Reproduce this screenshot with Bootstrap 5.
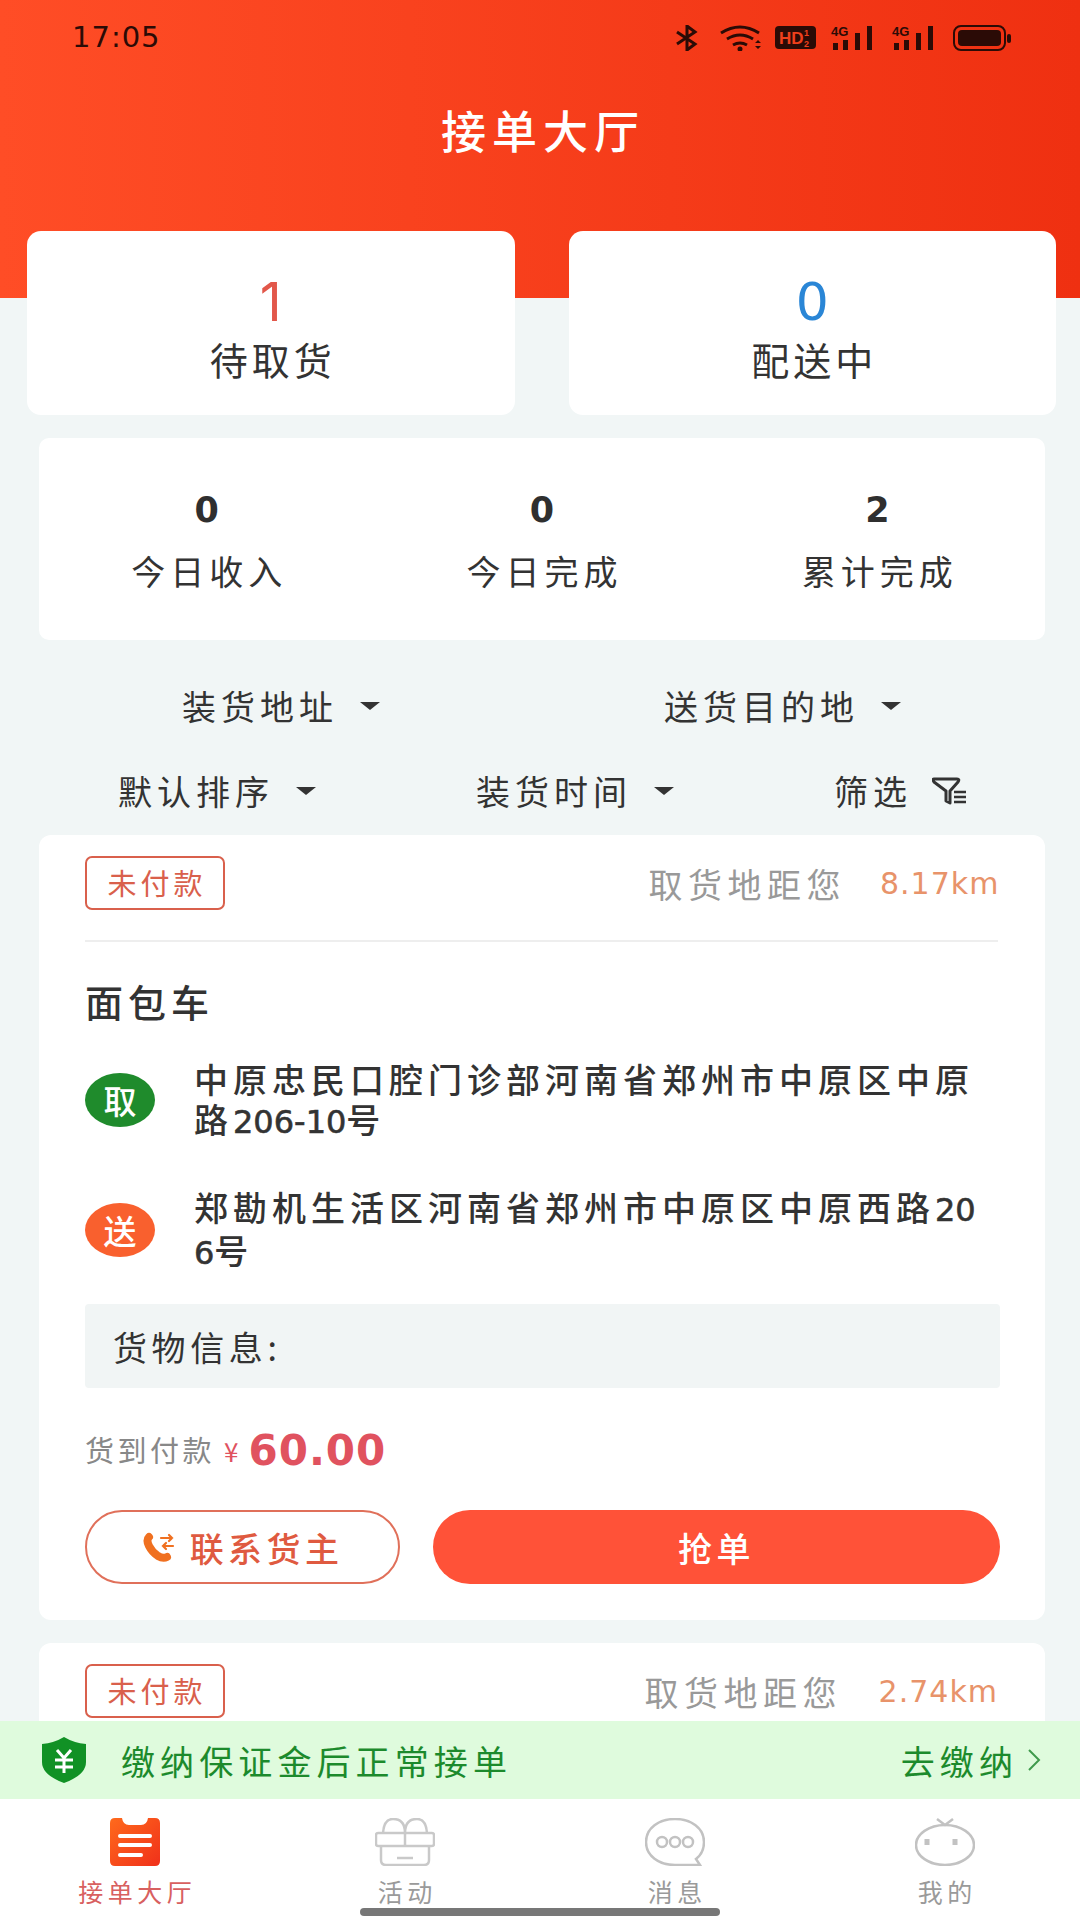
<!DOCTYPE html>
<html lang="zh-CN">
<head>
  <meta charset="UTF-8">
  <title>接单大厅</title>
  <meta name="viewport" content="width=device-width, initial-scale=1">
  <link href="https://cdn.jsdelivr.net/npm/bootstrap@5.3.3/dist/css/bootstrap.min.css" rel="stylesheet">
  <style>
    body {
      margin: 0;
      background: #f1f6f6;
      color: #333;
      font-family: "Noto Sans CJK SC", "Liberation Sans", sans-serif;
    }
    .phone { width: 1080px; height: 1920px; overflow: hidden; }
    .scroll-area { height: 1721px; overflow: hidden; }
    .num-font { font-family: "DejaVu Sans", "Noto Sans CJK SC", sans-serif; }

    /* header */
    .top-head { height: 298px; background: linear-gradient(to right, #ff4d26, #ef3011); }
    .status-row { height: 75px; padding: 0 68px 0 72px; color: #2b0b06; }
    .status-time { font-size: 29px; letter-spacing: 1px; }
    .page-title { height: 110px; color: #fff; font-size: 45px; font-weight: 500; letter-spacing: 6px; padding-left: 6px; }

    /* stats */
    .big-row { margin: -67px 24px 0 27px; gap: 54px; }
    .big-card { flex: 1; height: 184px; background: #fff; border-radius: 14px; }
    .big-num { font-family: Inter, sans-serif; font-size: 54px; font-weight: 400; line-height: 60px; padding-top: 41px; }
    .red-num { color: #e2574a; }
    .blue-num { color: #2a86d6; font-family: "DejaVu Sans", sans-serif; font-size: 52px; }
    .big-label { font-size: 38px; letter-spacing: 4px; line-height: 54px; margin-right: -4px; }
    .small-card { margin: 23px 35px 0 39px; height: 202px; background: #fff; border-radius: 10px; }
    .small-cell { flex: 1; }
    .small-num { font-size: 35px; font-weight: 700; line-height: 44px; padding-top: 50px; color: #2f2f2f; }
    .small-label { font-size: 34px; letter-spacing: 5px; line-height: 48px; margin-top: 15px; margin-right: -5px; }

    /* filters */
    .filter-row { font-size: 34px; letter-spacing: 5px; color: #333; line-height: 46px; }
    .filter-item { flex: none; }
    .filter-one { height: 89px; padding: 43px 0 0 182px; }
    .filter-one .filter-item { width: 482px; }
    .filter-two { height: 83px; padding: 40px 0 0 118px; }
    .filter-two .filter-item { width: 358px; }
    .caret-mark { width: 0; height: 0; margin-left: 22px; border-left: 10px solid transparent; border-right: 10px solid transparent; border-top: 8px solid #333; }
    .filter-icon { margin-left: 20px; }

    /* order */
    .order-box { margin: 23px 35px 0 39px; padding: 21px 47px 0 46px; height: 785px; background: #fff; border-radius: 12px; }
    .order-head { height: 86px; border-bottom: 2px solid #eee; }
    .pay-tag { width: 140px; height: 54px; border: 2px solid #d9604c; border-radius: 7px; color: #d9604c; font-size: 29px; letter-spacing: 4px; padding-left: 4px; }
    .dist-label { color: #999; font-size: 34px; letter-spacing: 5.5px; }
    .dist-value { color: #e8936a; font-size: 30px; letter-spacing: 1px; width: 118px; text-align: right; margin-left: 34px; white-space: nowrap; }
    .dist-wide { width: 122px; }
    .dist-wrap { height: 54px; }
    .car-type { font-size: 38px; font-weight: 500; letter-spacing: 5px; line-height: 50px; margin-top: 34px; }
    .addr-row { gap: 39px; }
    .addr-one { margin-top: 27px; height: 94px; }
    .addr-two { margin-top: 36px; height: 94px; }
    .addr-dot { flex: none; width: 70px; height: 54px; border-radius: 50%; color: #fff; font-size: 33px; font-weight: 500; line-height: 1; }
    .dot-green { background: #1f8b2c; }
    .dot-orange { background: #f9602e; }
    .addr-text { font-size: 34px; font-weight: 500; letter-spacing: 5px; line-height: 40px; color: #333; white-space: nowrap; }
    .addr-text .num-font { letter-spacing: 0; font-size: 32px; -webkit-text-stroke: 0.6px #333; }
    .cargo-box { height: 84px; margin-top: 27px; margin-right: -2px; padding-left: 28px; background: #f1f5f5; font-size: 34px; letter-spacing: 4.6px; border-radius: 4px; }
    .price-row { margin-top: 32px; height: 60px; }
    .price-note { color: #888; font-size: 29px; letter-spacing: 3.5px; }
    .price-mark { color: #e0525f; font-size: 26px; margin-left: 9px; }
    .price-val { color: #e0525f; font-size: 42px; font-weight: 700; letter-spacing: 1px; margin-left: 10px; }
    .btn-row { margin-top: 30px; gap: 33px; margin-right: -2px; }
    .call-btn { width: 315px; height: 74px; padding: 0; border: 2px solid #e0705a; border-radius: 37px; background: #fff; color: #df5a40; font-size: 34px; font-weight: 500; letter-spacing: 4.4px; gap: 14px; }
    .grab-btn { flex: 1; height: 74px; padding: 0; border: 0; border-radius: 37px; background: #ff5238; color: #fff; font-size: 34px; font-weight: 500; letter-spacing: 4.4px; }

    /* bottom */
    .notice-bar { height: 78px; padding: 0 38px 0 42px; background: #dffbdd; color: #1c8a2c; font-size: 34px; letter-spacing: 5.1px; }
    .notice-text { margin-left: 35px; }
    .tab-bar { height: 121px; background: #fff; }
    .tab-cell { flex: 1; padding-top: 19px; color: #9a9a9a; font-size: 25px; letter-spacing: 4.5px; }
    .tab-cell svg { display: block; }
    .tab-label { line-height: 34px; margin-top: 8px; margin-right: -4.5px; }
    .tab-on { color: #d8605f; }
    .home-line { position: absolute; left: 360px; bottom: 4px; width: 360px; height: 8px; border-radius: 4px; background: #777; }
  </style>
</head>
<body>
<div class="phone d-flex flex-column">
  <div class="scroll-area">

    <div class="top-head">
      <div class="status-row d-flex align-items-center justify-content-between">
        <span class="status-time num-font">17:05</span>
        <svg width="337" height="26" viewBox="0 0 337 26">
          <g fill="none" stroke="#2b0b06" stroke-width="3">
            <path d="M2 7l18 12-8 6V1l8 6L2 19"/>
            <path d="M46 8q19-12 38 0M52 14q13-8 26 0M58 20q7-4 14 0"/>
          </g>
          <circle cx="65" cy="24" r="2.5" fill="#2b0b06"/>
          <path d="M80 18l3-3 3 3zM80 21l3 3 3-3z" fill="#2b0b06"/>
          <rect x="100" y="1" width="41" height="23" rx="4" fill="#2b0b06"/>
          <text x="104" y="19" font-family="Liberation Sans" font-size="17" font-weight="700" fill="#f0401c">HD</text>
          <text x="129" y="11" font-family="Liberation Sans" font-size="9" font-weight="700" fill="#f0401c">1</text>
          <text x="129" y="22" font-family="Liberation Sans" font-size="9" font-weight="700" fill="#f0401c">2</text>
          <g fill="#2b0b06">
            <text x="156" y="11" font-family="Liberation Sans" font-size="13" font-weight="700">4G</text>
            <rect x="158" y="18" width="5" height="7"/><rect x="168" y="15" width="5" height="10"/><rect x="180" y="8" width="5" height="17"/><rect x="192" y="1" width="5" height="24"/>
            <text x="217" y="11" font-family="Liberation Sans" font-size="13" font-weight="700">4G</text>
            <rect x="219" y="18" width="5" height="7"/><rect x="229" y="15" width="5" height="10"/><rect x="241" y="8" width="5" height="17"/><rect x="253" y="1" width="5" height="24"/>
            <rect x="279" y="1" width="51" height="24" rx="7" fill="none" stroke="#2b0b06" stroke-width="2"/>
            <rect x="283" y="5" width="43" height="16" rx="4"/>
            <rect x="332" y="9" width="4" height="9" rx="2"/>
          </g>
        </svg>
      </div>
      <div class="page-title d-flex align-items-center justify-content-center">接单大厅</div>
    </div>

    <div class="big-row d-flex">
      <div class="big-card text-center">
        <div class="big-num red-num">1</div>
        <div class="big-label">待取货</div>
      </div>
      <div class="big-card text-center">
        <div class="big-num blue-num">0</div>
        <div class="big-label">配送中</div>
      </div>
    </div>

    <div class="small-card d-flex text-center">
      <div class="small-cell">
        <div class="small-num num-font">0</div>
        <div class="small-label">今日收入</div>
      </div>
      <div class="small-cell">
        <div class="small-num num-font">0</div>
        <div class="small-label">今日完成</div>
      </div>
      <div class="small-cell">
        <div class="small-num num-font">2</div>
        <div class="small-label">累计完成</div>
      </div>
    </div>

    <div class="filter-row filter-one d-flex">
      <div class="filter-item d-flex align-items-center"><span>装货地址</span><i class="caret-mark"></i></div>
      <div class="filter-item d-flex align-items-center"><span>送货目的地</span><i class="caret-mark"></i></div>
    </div>
    <div class="filter-row filter-two d-flex">
      <div class="filter-item d-flex align-items-center"><span>默认排序</span><i class="caret-mark"></i></div>
      <div class="filter-item d-flex align-items-center"><span>装货时间</span><i class="caret-mark"></i></div>
      <div class="filter-item d-flex align-items-center"><span>筛选</span>
        <svg class="filter-icon" width="36" height="28" viewBox="0 0 36 28" fill="none" stroke="#333" stroke-width="3" stroke-linejoin="round">
          <path d="M2 2h23q3 0 1 3l-8 9v12l-4-2V14L2 5q-2-3 0-3z"/>
          <path d="M22 15h12M22 20h12M22 25h12" stroke-width="2.4"/>
        </svg>
      </div>
    </div>

    <div class="order-box">
      <div class="order-head d-flex justify-content-between align-items-start">
        <div class="pay-tag d-flex align-items-center justify-content-center">未付款</div>
        <div class="dist-wrap d-flex align-items-center">
          <span class="dist-label">取货地距您</span>
          <span class="dist-value num-font">8.17km</span>
        </div>
      </div>
      <div class="car-type">面包车</div>
      <div class="addr-row addr-one d-flex align-items-center">
        <div class="addr-dot dot-green d-flex align-items-center justify-content-center">取</div>
        <div class="addr-text">中原忠民口腔门诊部河南省郑州市中原区中原<br>路<span class="num-font">206-10</span>号</div>
      </div>
      <div class="addr-row addr-two d-flex align-items-center">
        <div class="addr-dot dot-orange d-flex align-items-center justify-content-center">送</div>
        <div class="addr-text">郑勘机生活区河南省郑州市中原区中原西路<span class="num-font">20</span><br><span class="num-font">6</span>号</div>
      </div>
      <div class="cargo-box d-flex align-items-center">货物信息:</div>
      <div class="price-row d-flex align-items-center">
        <span class="price-note">货到付款</span>
        <span class="price-mark">¥</span>
        <span class="price-val num-font">60.00</span>
      </div>
      <div class="btn-row d-flex">
        <button class="btn call-btn d-flex align-items-center justify-content-center" type="button">
          <svg width="34" height="30" viewBox="0 0 34 30" fill="none" stroke="#f07020" stroke-linecap="round">
            <path d="M7 5q-3 3 0 9t9 10q5 3 9 1" stroke-width="8"/>
            <path d="M19 6h11m-3-3l3 3-3 3M31 14H21m3-3l-3 3 3 3" stroke-width="2.2"/>
          </svg>
          <span>联系货主</span>
        </button>
        <button class="btn grab-btn" type="button">抢单</button>
      </div>
    </div>

    <div class="order-box">
      <div class="order-head d-flex justify-content-between align-items-start">
        <div class="pay-tag d-flex align-items-center justify-content-center">未付款</div>
        <div class="dist-wrap d-flex align-items-center">
          <span class="dist-label">取货地距您</span>
          <span class="dist-value dist-wide num-font">2.74km</span>
        </div>
      </div>
    </div>
  </div>

  <div class="notice-bar d-flex align-items-center">
    <svg width="44" height="46" viewBox="0 0 44 46">
      <path d="M22 0q10 6 22 7v18q0 13-22 21Q0 38 0 25V7q12-1 22-7z" fill="#119125"/>
      <path d="M15 13l7 8 7-8M13 23h18M13 30h18M22 21v15" fill="none" stroke="#fff" stroke-width="3"/>
    </svg>
    <span class="notice-text flex-grow-1">缴纳保证金后正常接单</span>
    <span>去缴纳</span>
    <svg class="ms-2" width="16" height="24" viewBox="0 0 16 24" fill="none" stroke="#3f9a4c" stroke-width="2"><path d="M3 2l10 10L3 22"/></svg>
  </div>

  <div class="tab-bar d-flex position-relative text-center">
    <div class="tab-cell tab-on d-flex flex-column align-items-center">
      <svg width="50" height="48" viewBox="0 0 50 48">
        <defs><linearGradient id="clipFill" x1="0" y1="0" x2="1" y2="1"><stop offset="0" stop-color="#ff6a1c"/><stop offset="1" stop-color="#f0301a"/></linearGradient></defs>
        <path d="M5 0h7q1 7 7 7h12q6 0 7-7h7q5 0 5 5v38q0 5-5 5H5q-5 0-5-5V5q0-5 5-5z" fill="url(#clipFill)"/>
        <path d="M10 18h30M10 27h30M10 37h21" stroke="#fff" stroke-width="4" stroke-linecap="round"/>
      </svg>
      <div class="tab-label">接单大厅</div>
    </div>
    <div class="tab-cell d-flex flex-column align-items-center">
      <svg width="60" height="48" viewBox="0 0 60 48" fill="none" stroke="#c9c9c9" stroke-width="2.5">
        <path d="M3 15h54q2 0 2 2v9q0 2-2 2H3q-2 0-2-2v-9q0-2 2-2zM6 28v14q0 5 5 5h38q5 0 5-5V28M30 15v13M30 15q0-14-12-14-9 0-10 14M30 15q0-14 12-14 9 0 10 14M22 40h16"/>
      </svg>
      <div class="tab-label">活动</div>
    </div>
    <div class="tab-cell d-flex flex-column align-items-center">
      <svg width="60" height="48" viewBox="0 0 60 48" fill="none" stroke="#c2c2c2" stroke-width="2.5">
        <path d="M30 1c16 0 29 9 29 23 0 8-4 14-8 17l4 6H30C14 47 1 38 1 24S14 1 30 1z"/>
        <circle cx="17" cy="24" r="5"/><circle cx="30" cy="24" r="5"/><circle cx="43" cy="24" r="5"/>
      </svg>
      <div class="tab-label">消息</div>
    </div>
    <div class="tab-cell d-flex flex-column align-items-center">
      <svg width="60" height="48" viewBox="0 0 60 48" fill="none" stroke="#c2c2c2" stroke-width="2.5">
        <ellipse cx="30" cy="27" rx="29" ry="20"/>
        <path d="M22 1l8 6 8-6"/>
        <path d="M12 21v6M40 21v6" stroke-width="5"/>
      </svg>
      <div class="tab-label">我的</div>
    </div>
    <div class="home-line"></div>
  </div>
</div>
<script src="https://cdn.jsdelivr.net/npm/bootstrap@5.3.3/dist/js/bootstrap.bundle.min.js"></script>
</body>
</html>
